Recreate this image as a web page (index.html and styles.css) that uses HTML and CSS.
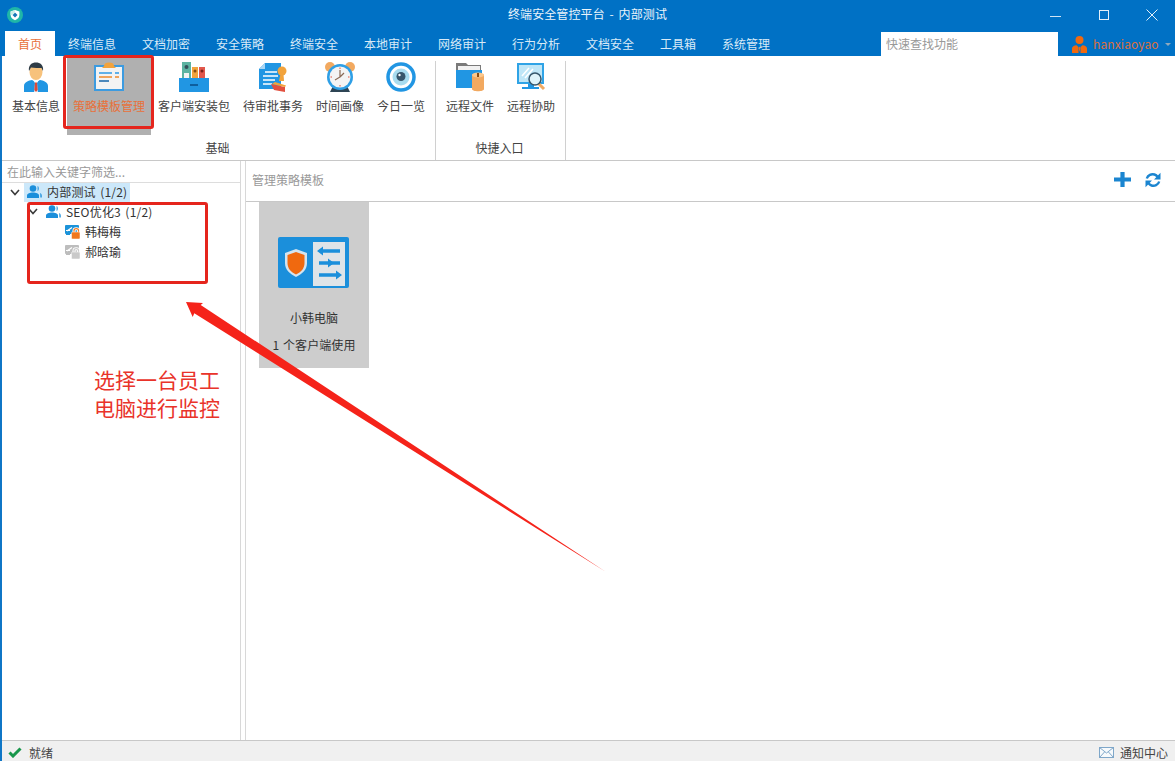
FILE: index.html
```html
<!DOCTYPE html>
<html lang="zh">
<head>
<meta charset="utf-8">
<title>终端安全管控平台 - 内部测试</title>
<link rel="stylesheet" href="styles.css">
</head>
<body>
<div class="app">
  <header class="titlebar">
    <svg class="app-logo" width="16" height="16" viewBox="0 0 16 16"><circle cx="8" cy="8" r="8" fill="#1fb6a8"/><path d="M8 3 12.400 4.600V8C12.400 10.500 10.500 12.200 8 13.200 5.500 12.200 3.600 10.500 3.600 8V4.600Z" fill="#fff"/><path d="M8 5.500 10.500 8 8 10.500 5.500 8Z" fill="#1677b8"/><path d="M8 3V5.500L5.500 8H3.600V4.600Z" fill="#c9efe9"/></svg>
    <div class="title">终端安全管控平台 - 内部测试</div>
    <div class="win-btns">
      <svg width="12" height="12" viewBox="0 0 12 12"><path d="M0 7.500H11" stroke="#cfe4f5" fill="none"/></svg>
      <svg width="12" height="12" viewBox="0 0 12 12"><rect x="1.500" y="1.500" width="9" height="9" stroke="#e3f0fa" fill="none"/></svg>
      <svg width="12" height="12" viewBox="0 0 12 12"><path d="M.5.500 11.500 11.500M11.500.500.500 11.500" stroke="#e3f0fa" fill="none"/></svg>
    </div>
  </header>
  <nav class="tabbar">
    <div class="tabs">
      <span class="tab tab-active">首页</span>
      <span class="tab">终端信息</span>
      <span class="tab">文档加密</span>
      <span class="tab">安全策略</span>
      <span class="tab">终端安全</span>
      <span class="tab">本地审计</span>
      <span class="tab">网络审计</span>
      <span class="tab">行为分析</span>
      <span class="tab">文档安全</span>
      <span class="tab tab-short">工具箱</span>
      <span class="tab">系统管理</span>
    </div>
    <div class="quick-search">快速查找功能</div>
    <div class="user">
      <svg width="15" height="17" viewBox="0 0 15 17"><circle cx="7.500" cy="4" r="4" fill="#f0690f"/><path d="M0 17V12.500C0 10.500 2 9.500 4.500 9.300L6.500 11V17ZM15 17V12.500C15 10.500 13 9.500 10.500 9.300L8.500 11V17Z" fill="#f0690f"/><path d="M7.500 10.500 8.500 12 7.500 16 6.500 12Z" fill="#f0690f"/></svg>
      <span class="user-name">hanxiaoyao</span>
      <span class="caret"></span>
    </div>
  </nav>
  <section class="ribbon">
    <div class="group">
      <div class="group-items">
        <div class="rb-item">
          <svg class="rb-icon" viewBox="0 0 30 30"><path d="M3 30V24C3 20 8 18.500 11 18L15 20 19 18C22 18.500 27 20 27 24V30Z" fill="#2196e3"/><path d="M12 18H18L16 21 16.800 30H13.200L14 21Z" fill="#fff"/><path d="M14 20.500H16L16.700 28 15 30 13.300 28Z" fill="#d94b3d"/><ellipse cx="15" cy="10" rx="6.500" ry="8" fill="#f7c27c"/><path d="M8 9C7 3 11 .5 15 .5S23 3 22 9L20.500 6C18 6 13 6 10 5.500Z" fill="#2e3b45"/></svg>
          <span class="rb-label">基本信息</span>
        </div>
        <div class="rb-item rb-selected">
          <svg class="rb-icon" viewBox="0 0 30 30"><rect x="1" y="4" width="28" height="24" fill="#f3f3f3" stroke="#3c9be0" stroke-width="2"/><path d="M10 4C10 1.500 12 .5 15 .5S20 1.500 20 4L22 6H8Z" fill="#f2a33c"/><path d="M5 11H18M21 11H25" stroke="#2f9ae6" stroke-width="1.500"/><path d="M5 15H18M21 15H25" stroke="#f08a2c" stroke-width="1.500"/><path d="M5 19H15" stroke="#1565a8" stroke-width="1.500"/></svg>
          <span class="rb-label rb-label-on">策略模板管理</span>
        </div>
        <div class="rb-item">
          <svg class="rb-icon" viewBox="0 0 30 30"><rect x="3" y="0" width="9" height="20" fill="#5cb3a1"/><rect x="13" y="5" width="6" height="15" fill="#f2a33c"/><rect x="20" y="5" width="6" height="15" fill="#e2584c"/><circle cx="7.500" cy="5" r="2" fill="#33505a"/><circle cx="16" cy="9" r="1.500" fill="#8a4b10"/><circle cx="23" cy="9" r="1.500" fill="#7d2219"/><rect x="5" y="11" width="5" height="5" fill="#f2f2f2"/><path d="M0 16H30V30H0Z" fill="#2196e3"/><path d="M11 23H19" stroke="#0e5f9e" stroke-width="2"/></svg>
          <span class="rb-label">客户端安装包</span>
        </div>
        <div class="rb-item">
          <svg class="rb-icon" viewBox="0 0 30 30"><path d="M7 1H23V27H1V7Z" fill="#2196e3"/><path d="M7 1V7H1Z" fill="#a9d6f5"/><path d="M7 10H19M5 14H20M5 18H17M5 22H14" stroke="#fff" stroke-width="1.300"/><circle cx="24" cy="9" r="4.500" fill="#f2a33c"/><path d="M22.500 12H25.500L26 19H21Z" fill="#f2a33c"/><path d="M13 22 27 25V30L16 28Z" fill="#e2503f"/><path d="M17 20 28 23.500 27 25 14 22Z" fill="#f2a33c"/></svg>
          <span class="rb-label">待审批事务</span>
        </div>
        <div class="rb-item">
          <svg class="rb-icon" viewBox="0 0 30 30"><circle cx="5" cy="5" r="5" fill="#f2a960"/><circle cx="25" cy="5" r="5" fill="#f2a960"/><path d="M5 30 8 24H22L25 30Z" fill="#2e4454"/><circle cx="15" cy="15" r="13" fill="#2e9fe6"/><circle cx="15" cy="15" r="10.500" fill="#f4f4f4"/><path d="M15 8V15L10 18M15 15 19 11" stroke="#8a6a55" stroke-width="1.200" fill="none"/><path d="M15 5.500V7M15 23V24.500M5.500 15H7M23 15H24.500" stroke="#e2503f"/></svg>
          <span class="rb-label">时间画像</span>
        </div>
        <div class="rb-item">
          <svg class="rb-icon" viewBox="0 0 30 30"><circle cx="15" cy="15" r="13" fill="#fff" stroke="#2196e3" stroke-width="3.500"/><circle cx="15" cy="15" r="8.500" fill="#a8dcef"/><circle cx="15" cy="14.500" r="4.500" fill="#37566b"/><circle cx="13.500" cy="13" r="1.200" fill="#fff"/></svg>
          <span class="rb-label">今日一览</span>
        </div>
      </div>
      <div class="group-name">基础</div>
    </div>
    <div class="group group-2">
      <div class="group-items">
        <div class="rb-item">
          <svg class="rb-icon" viewBox="0 0 30 30"><path d="M1 1H11L13 3H26V9H1Z" fill="#7a7a7a"/><rect x="3" y="4" width="22" height="5" fill="#f1f1f1"/><path d="M1 8H27V26H1Z" fill="#2196e3"/><path d="M17 13C17 11 29 11 29 13V27C29 30 17 30 17 27Z" fill="#f2a960"/><ellipse cx="23" cy="13" rx="6" ry="2.500" fill="#fbc78c"/><rect x="22" y="11" width="2" height="4" fill="#8a4b10"/></svg>
          <span class="rb-label">远程文件</span>
        </div>
        <div class="rb-item">
          <svg class="rb-icon" viewBox="0 0 30 30"><rect x="1" y="1" width="27" height="21" fill="#2fa3e6"/><rect x="3" y="3" width="23" height="17" fill="#bfe6f7"/><path d="M6 14 13 6M9 16 17 7" stroke="#fff" stroke-width="1.500"/><path d="M12 22H18V25H23V27H6V25H12Z" fill="#2196e3"/><path d="M22 21 28 27" stroke="#f2a960" stroke-width="3"/><circle cx="19" cy="17" r="6" fill="#dff3fa" stroke="#37566b" stroke-width="1.500"/></svg>
          <span class="rb-label">远程协助</span>
        </div>
      </div>
      <div class="group-name group-name-2">快捷入口</div>
    </div>
  </section>
  <main class="content">
    <aside class="tree-panel">
      <div class="filter">在此输入关键字筛选...</div>
      <div class="tree">
        <div class="node node-root">
          <svg class="chev" width="10" height="7" viewBox="0 0 10 7"><path d="M1 1 5 5.500 9 1" fill="none" stroke="#3a3a3a" stroke-width="1.600"/></svg>
          <span class="node-sel">
            <svg width="15" height="13" viewBox="0 0 15 13"><use href="#users"/></svg>
            <span class="node-text">内部测试 (1/2)</span>
          </span>
        </div>
        <div class="node node-sub">
          <svg class="chev" width="10" height="7" viewBox="0 0 10 7"><path d="M1 1 5 5.500 9 1" fill="none" stroke="#3a3a3a" stroke-width="1.600"/></svg>
          <svg class="sub-ico" width="15" height="13" viewBox="0 0 15 13"><use href="#users"/></svg>
          <span class="node-text">SEO优化3 (1/2)</span>
        </div>
        <div class="node node-leaf">
          <svg width="15" height="15" viewBox="0 0 15 15"><rect y="1" width="14" height="9" rx="1" fill="#1c93d9"/><path d="M2 7 7 3.500" stroke="#fff" stroke-width="1.300"/><path d="M1 8.500H5V11H1Z" fill="#1c93d9"/><path d="M1 6.500H5" stroke="#fff"/><path d="M9 8.500V6.500C9 4 13.500 4 13.500 6.500V8.500" fill="none" stroke="#fff" stroke-width="3"/><path d="M9 8.500V6.500C9 4 13.500 4 13.500 6.500V8.500" fill="none" stroke="#f0781e" stroke-width="1.200"/><rect x="6.500" y="8" width="8.500" height="7" rx="1" fill="#f0781e" stroke="#fff" stroke-width=".5"/></svg>
          <span>韩梅梅</span>
        </div>
        <div class="node node-leaf">
          <svg width="15" height="15" viewBox="0 0 15 15"><rect y="1" width="14" height="9" rx="1" fill="#bdbdbd"/><path d="M2 7 7 3.500" stroke="#fff" stroke-width="1.300"/><path d="M1 8.500H5V11H1Z" fill="#bdbdbd"/><path d="M1 6.500H5" stroke="#fff"/><path d="M9 8.500V6.500C9 4 13.500 4 13.500 6.500V8.500" fill="none" stroke="#fff" stroke-width="3"/><path d="M9 8.500V6.500C9 4 13.500 4 13.500 6.500V8.500" fill="none" stroke="#c9c9c9" stroke-width="1.200"/><rect x="6.500" y="8" width="8.500" height="7" rx="1" fill="#c9c9c9" stroke="#fff" stroke-width=".5"/></svg>
          <span>郝晗瑜</span>
        </div>
      </div>
    </aside>
    <section class="main-panel">
      <div class="panel-head">
        <span class="panel-title">管理策略模板</span>
        <div class="panel-tools">
          <svg width="19" height="17" viewBox="0 0 19 17"><path d="M9.500 1V16M1 8.500H18" stroke="#1b85d0" stroke-width="4.200"/></svg>
          <svg width="16" height="16" viewBox="0 0 16 16"><path d="M1.800 6.500C2.800 3 6.500 1.500 9.500 2.500 11 3 12 4 12.800 5" fill="none" stroke="#1b85d0" stroke-width="2.400"/><path d="M15.500.800V7.500H9Z" fill="#1b85d0"/><path d="M14.200 9.500C13.200 13 9.500 14.500 6.500 13.500 5 13 4 12 3.200 11" fill="none" stroke="#1b85d0" stroke-width="2.400"/><path d="M.5 15.200V8.500H7Z" fill="#1b85d0"/></svg>
        </div>
      </div>
      <div class="cards">
        <div class="card">
          <svg class="card-icon" viewBox="0 0 71 51"><rect width="71" height="51" rx="2" fill="#1b8fdb"/><rect x="35" y="5" width="32" height="44" fill="#dfe4e8"/><path d="M18 12 29 16V26C29 33 24 37 18 40 12 37 7 33 7 26V16Z" fill="#f3f3f3" opacity=".85"/><path d="M18 15 26.500 18V26C26.500 31.500 23 35 18 37.500 13 35 9.500 31.500 9.500 26V18Z" fill="#f0690f"/><path d="M43 14H62M41 26H62M41 38H60" stroke="#1b8fdb" stroke-width="3.400"/><path d="M39 14 45 9.500V18.500ZM56 26 50 21.500V30.500ZM64 38 58 33.500V42.500Z" fill="#1b8fdb"/></svg>
          <div class="card-name">小韩电脑</div>
          <div class="card-count">1 个客户端使用</div>
        </div>
      </div>
    </section>
  </main>
  <footer class="statusbar">
    <div class="status-left">
      <svg width="14" height="11" viewBox="0 0 14 11"><path d="M1.500 5.500 5 9 12.500 1.500" fill="none" stroke="#17964a" stroke-width="3"/></svg>
      <span>就绪</span>
    </div>
    <div class="status-right">
      <svg width="15" height="11" viewBox="0 0 15 11"><rect x=".5" y=".5" width="14" height="10" fill="#f7fafc" stroke="#7fa7c9"/><path d="M.5.500 7.500 6 14.500.500M.5 10.500 5.500 5M14.500 10.500 9.500 5" fill="none" stroke="#7fa7c9"/></svg>
      <span>通知中心</span>
    </div>
  </footer>

  <div class="mark mark-ribbon"></div>
  <div class="mark mark-tree"></div>
  <svg class="arrow" width="1175" height="761" viewBox="0 0 1175 761"><path d="M186 302 203 303 200.700 305 606 572 194.300 313.300 192.700 317Z" fill="#f5231a"/></svg>
  <div class="note">选择一台员工<br>电脑进行监控</div>
</div>
<svg class="defs" width="0" height="0"><defs><g id="users"><circle cx="6" cy="3.500" r="3.300" fill="#1b8fdb"/><path d="M0 13V10.500C0 8.500 3 7.500 6 7.500S12 8.500 12 10.500V13Z" fill="#1b8fdb"/><path d="M10.500 1C12.500 1.500 12.500 5.500 10.500 6M13 8C14.500 8.500 15 9.500 15 11V12.500H13.200" fill="#1b8fdb" opacity=".75"/></g></defs></svg>
</body>
</html>
```
FILE: styles.css
```css
* { box-sizing: border-box; }
html, body { margin: 0; height: 100%; overflow: hidden; }
body { font-family: "Noto Sans CJK SC", "Liberation Sans", sans-serif; font-size: 12px; color: #333; background: #fff; }
svg { display: block; flex: none; }
.defs { position: absolute; }
.app { position: relative; width: 1175px; height: 761px; display: flex; flex-direction: column; border-left: 2px solid #0f76c6; }

.titlebar { height: 31px; background: #0071c5; margin-left: -2px; display: flex; align-items: center; padding: 0 0 2px 7px; position: relative; flex: none; }
.app-logo { margin-top: 1px; }
.title { position: absolute; left: 0; right: 0; top: 5px; text-align: center; color: #eaf4fb; font-size: 12px; word-spacing: 2px; letter-spacing: .1px; }
.win-btns { margin-left: auto; display: flex; gap: 36px; padding-right: 17px; }

.tabbar { height: 25px; background: #0071c5; margin-left: -2px; display: flex; align-items: flex-end; flex: none; padding-left: 5px; }
.tabs { display: flex; }
.tab { width: 74px; height: 25px; line-height: 26px; text-align: center; color: #d8eaf7; font-size: 12px; }
.tab-active { width: 50px; background: #fff; color: #e8703a; }
.tab-short { width: 62px; }
.quick-search { margin-left: 98px; width: 177px; height: 24px; background: #fff; color: #999; font-size: 12px; line-height: 23px; padding-left: 5px; }
.user { display: flex; align-items: center; height: 24px; padding-left: 14px; gap: 6px; }
.user-name { color: #d9703f; font-size: 12px; letter-spacing: .1px; padding-bottom: 2px; }
.caret { width: 0; height: 0; border: 3px solid transparent; border-top-color: #8fa9bd; border-bottom: 0; margin-left: 0; }

.ribbon { height: 105px; display: flex; border-bottom: 1px solid #c8c8c8; flex: none; padding-left: 4px; background: #fff; }
.group { display: flex; flex-direction: column; height: 99px; border-right: 1px solid #d0d0d0; margin-top: 5px; width: 430px; position: relative; }
.group-2 { width: 130px; padding-left: 4px; }
.group-items { display: flex; align-items: flex-start; margin-top: -5px; height: 84px; }
.group-name { text-align: center; color: #444; line-height: 18px; margin-top: -1px; padding-right: 6px; }
.group-name-2 { padding-right: 6px; }
.rb-item { display: flex; flex-direction: column; align-items: center; padding: 6px 6px 0; height: 79px; margin-right: 1px; }
.rb-icon { width: 30px; height: 30px; }
.rb-label { margin-top: 5px; line-height: 18px; white-space: nowrap; color: #444; }
.rb-selected { background: #b0b0b0; margin-right: 1px; width: 84px; }
.rb-label-on { color: #e8703a; }

.content { flex: 1; display: flex; min-height: 0; background: #fff; }
.tree-panel { width: 239px; border-right: 1px solid #d8d8d8; flex: none; }
.filter { height: 22px; line-height: 21px; padding-left: 5px; color: #999; border-bottom: 1px solid #ddd; font-size: 12px; }
.node { display: flex; align-items: center; height: 20px; color: #333; white-space: nowrap; padding-bottom: 2px; }
.node-text { letter-spacing: .2px; word-spacing: 1.500px; }
.node-root { padding-left: 8px; height: 19px; padding-bottom: 0; }
.node-sel { display: flex; align-items: center; gap: 5px; margin-left: 4px; background: #cce8fa; height: 19px; padding: 0 3px 2px 3px; }
.node-sub { padding-left: 26px; }
.sub-ico { margin-left: 8px; margin-right: 5px; }
.node-leaf { padding-left: 63px; gap: 5px; }

.main-panel { flex: 1; margin-left: 4px; border-left: 1px solid #d8d8d8; display: flex; flex-direction: column; min-width: 0; }
.panel-head { height: 41px; border-bottom: 1px solid #c8c8c8; display: flex; align-items: center; padding: 0 14px 3px 6px; flex: none; }
.panel-title { color: #999; }
.panel-tools { margin-left: auto; display: flex; align-items: center; gap: 13px; }
.cards { padding: 0 13px; }
.card { width: 110px; height: 166px; background: #cdcdcd; display: flex; flex-direction: column; align-items: center; }
.card-icon { width: 71px; height: 51px; margin: 35px 2px 0 0; }
.card-name { margin-top: 21px; line-height: 18px; color: #333; }
.card-count { margin-top: 9px; line-height: 18px; color: #333; word-spacing: 1px; letter-spacing: .1px; }

.statusbar { height: 21px; background: #f0f0f0; border-top: 1px solid #c8c8c8; display: flex; justify-content: space-between; align-items: center; flex: none; padding: 2px 7px 0 6px; color: #444; }
.status-left { display: flex; align-items: center; gap: 7px; }
.status-right { display: flex; align-items: center; gap: 6px; }

.mark { position: absolute; border: 3px solid #e5251d; border-radius: 3px; }
.mark-ribbon { left: 61px; top: 55px; width: 91px; height: 74px; }
.mark-tree { left: 25px; top: 202px; width: 181px; height: 82px; }
.arrow { position: absolute; left: -2px; top: 0; pointer-events: none; }
.note { position: absolute; left: 92px; top: 365px; color: #e9332a; font-size: 21px; line-height: 28px; white-space: nowrap; }
```
